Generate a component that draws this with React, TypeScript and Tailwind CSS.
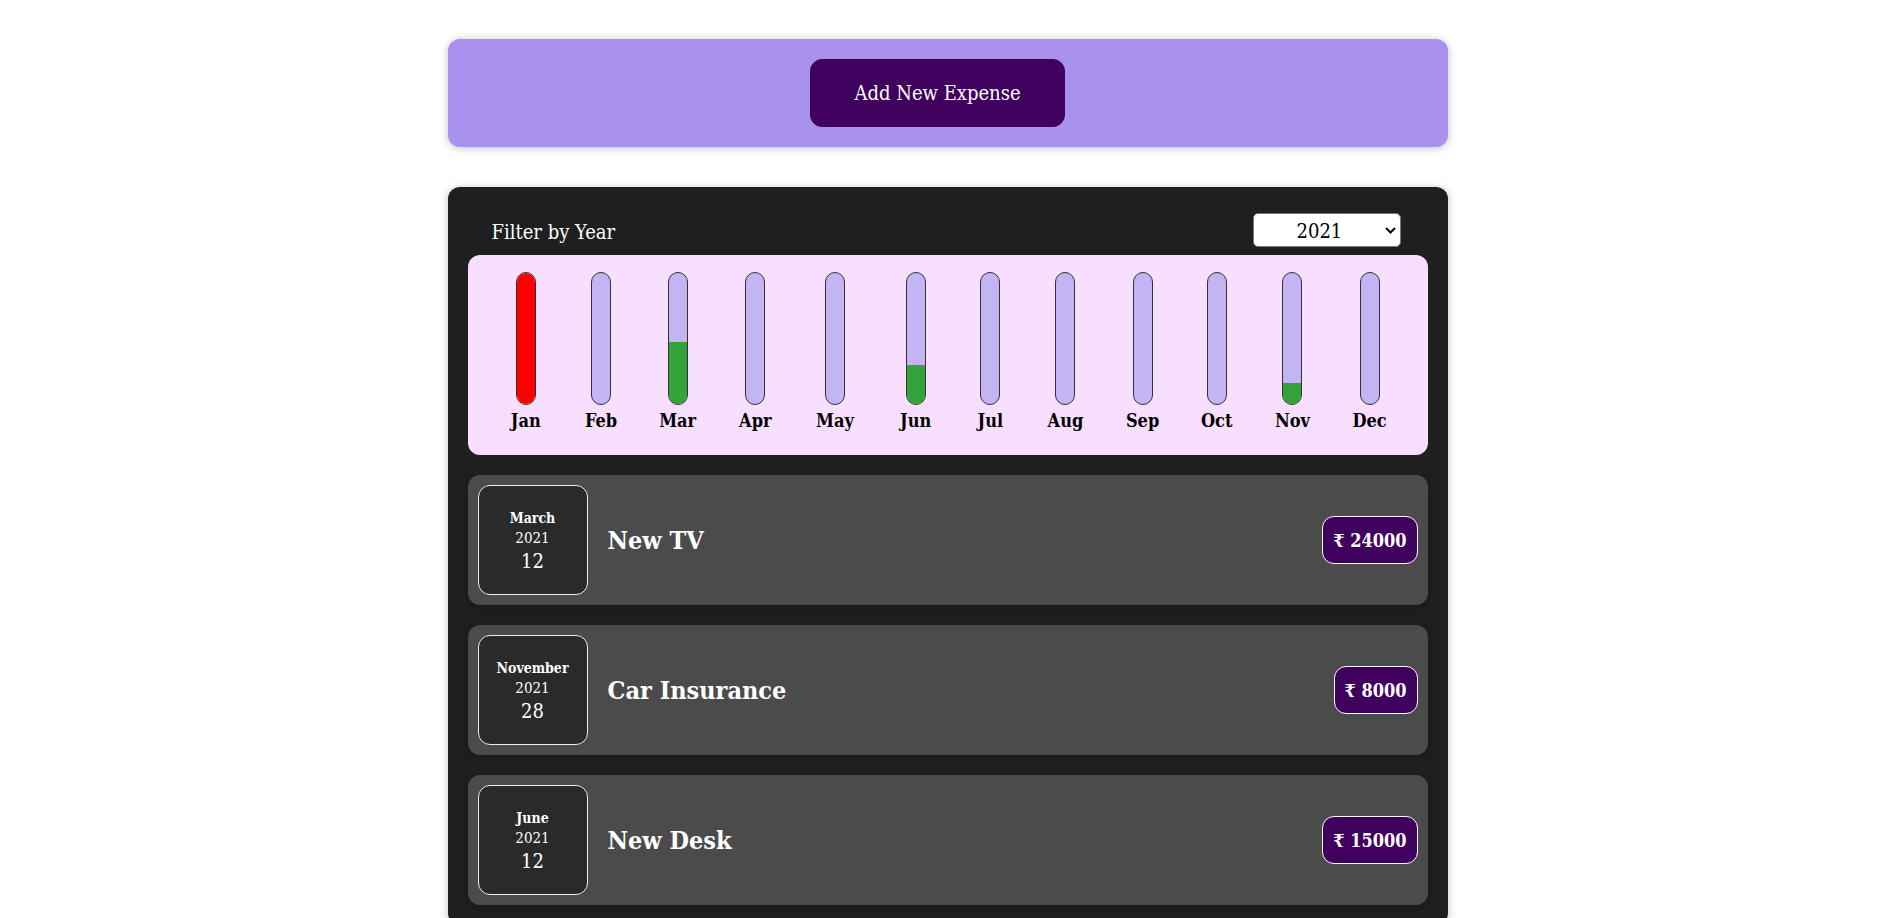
import React from "react";

const months = [
  { label: "Jan", w: "w-[35px]", fill: "h-full bg-[#ff0000]" },
  { label: "Feb", w: "w-[32px]", fill: "h-0" },
  { label: "Mar", w: "w-[38px]", fill: "h-[47%] bg-[#33a33a]" },
  { label: "Apr", w: "w-[34px]", fill: "h-0" },
  { label: "May", w: "w-[42px]", fill: "h-0" },
  { label: "Jun", w: "w-[36px]", fill: "h-[30%] bg-[#33a33a]" },
  { label: "Jul", w: "w-[30px]", fill: "h-0" },
  { label: "Aug", w: "w-[37px]", fill: "h-0" },
  { label: "Sep", w: "w-[34px]", fill: "h-0" },
  { label: "Oct", w: "w-[31px]", fill: "h-0" },
  { label: "Nov", w: "w-[37px]", fill: "h-[16%] bg-[#33a33a]" },
  { label: "Dec", w: "w-[34px]", fill: "h-0" },
];

const expenses = [
  { id: 1, month: "March", year: "2021", day: "12", title: "New TV", amount: 24000 },
  { id: 2, month: "November", year: "2021", day: "28", title: "Car Insurance", amount: 8000 },
  { id: 3, month: "June", year: "2021", day: "12", title: "New Desk", amount: 15000 },
];

const ExpenseDate = ({ month, year, day }: { month: string; year: string; day: string }) => (
  <div className="flex h-[110px] w-[110px] shrink-0 flex-col items-center justify-center rounded-[12px] border border-[#ececec] bg-[#2a2a2a] pt-[2px] text-white">
    <div className="text-[14px] leading-[20px] font-bold">{month}</div>
    <div className="text-[15px] leading-[20px]">{year}</div>
    <div className="text-[20px] leading-[26px]">{day}</div>
  </div>
);

const ExpenseItem = ({ e }: { e: (typeof expenses)[number] }) => (
  <div className="flex items-center rounded-[12px] bg-[#4b4b4b] p-[10px] shadow-[0_2px_8px_rgba(0,0,0,0.25)]">
    <ExpenseDate month={e.month} year={e.year} day={e.day} />
    <h2 className="mx-5 flex-1 pt-[2px] text-[25px] leading-[34px] font-bold text-white">{e.title}</h2>
    <div className="rounded-[12px] border border-white bg-[#40005d] px-[10px] pt-[11px] pb-[9px] text-[18px] leading-[26px] font-bold text-white">
      ₹ {e.amount}
    </div>
  </div>
);

export default function App() {
  return (
    <div className="min-h-screen bg-white pt-[39px] pb-10 font-['DejaVu_Serif_Condensed','DejaVu_Serif',serif]">
      <div className="mx-auto flex w-[1000px] justify-center rounded-[12px] bg-[#a892ee] p-5 shadow-[0_1px_8px_rgba(0,0,0,0.25)]">
        <button className="mr-5 h-[68px] w-[255px] rounded-[12px] border border-[#40005d] bg-[#40005d] text-[20px] text-white">
          Add New Expense
        </button>
      </div>

      <div className="mx-auto mt-10 w-[1000px] rounded-[12px] bg-[#1f1f1f] p-5 shadow-[0_1px_8px_rgba(0,0,0,0.25)]">
        <div className="flex items-center justify-between pt-[6px] pr-[27px] pb-[8px] pl-[24px] text-white">
          <label className="pt-[3px] text-[20px] leading-[26px]">Filter by Year</label>
          <div className="relative">
            <select
              defaultValue="2021"
              className="block h-[34px] w-[148px] appearance-none rounded-[5px] border border-[#767676] bg-white pt-[1px] pr-[30px] pl-[43px] text-[20px] text-black"
            >
              <option value="2022">2022</option>
              <option value="2021">2021</option>
              <option value="2020">2020</option>
              <option value="2019">2019</option>
            </select>
            <svg
              className="pointer-events-none absolute top-[14px] right-[5px]"
              width="11"
              height="7"
              viewBox="0 0 11 7"
              fill="none"
              stroke="black"
              strokeWidth="2"
            >
              <path d="M1 1l4.5 4.5L10 1" />
            </svg>
          </div>
        </div>

        <div className="flex h-[200px] justify-around rounded-[12px] bg-[#f8dfff] px-5 pt-[17px]">
          {months.map((m) => (
            <div key={m.label} className={`flex flex-col items-center ${m.w}`}>
              <div className="flex h-[133px] w-5 flex-col justify-end overflow-hidden rounded-full border border-[#313131] bg-[#c3b4f3]">
                <div className={`w-full ${m.fill}`} />
              </div>
              <div className="pt-[2px] text-[18px] leading-[28px] font-bold whitespace-nowrap text-black">{m.label}</div>
            </div>
          ))}
        </div>

        <div className="mt-5 flex flex-col gap-5">
          {expenses.map((e) => (
            <ExpenseItem key={e.id} e={e} />
          ))}
        </div>
      </div>
    </div>
  );
}
